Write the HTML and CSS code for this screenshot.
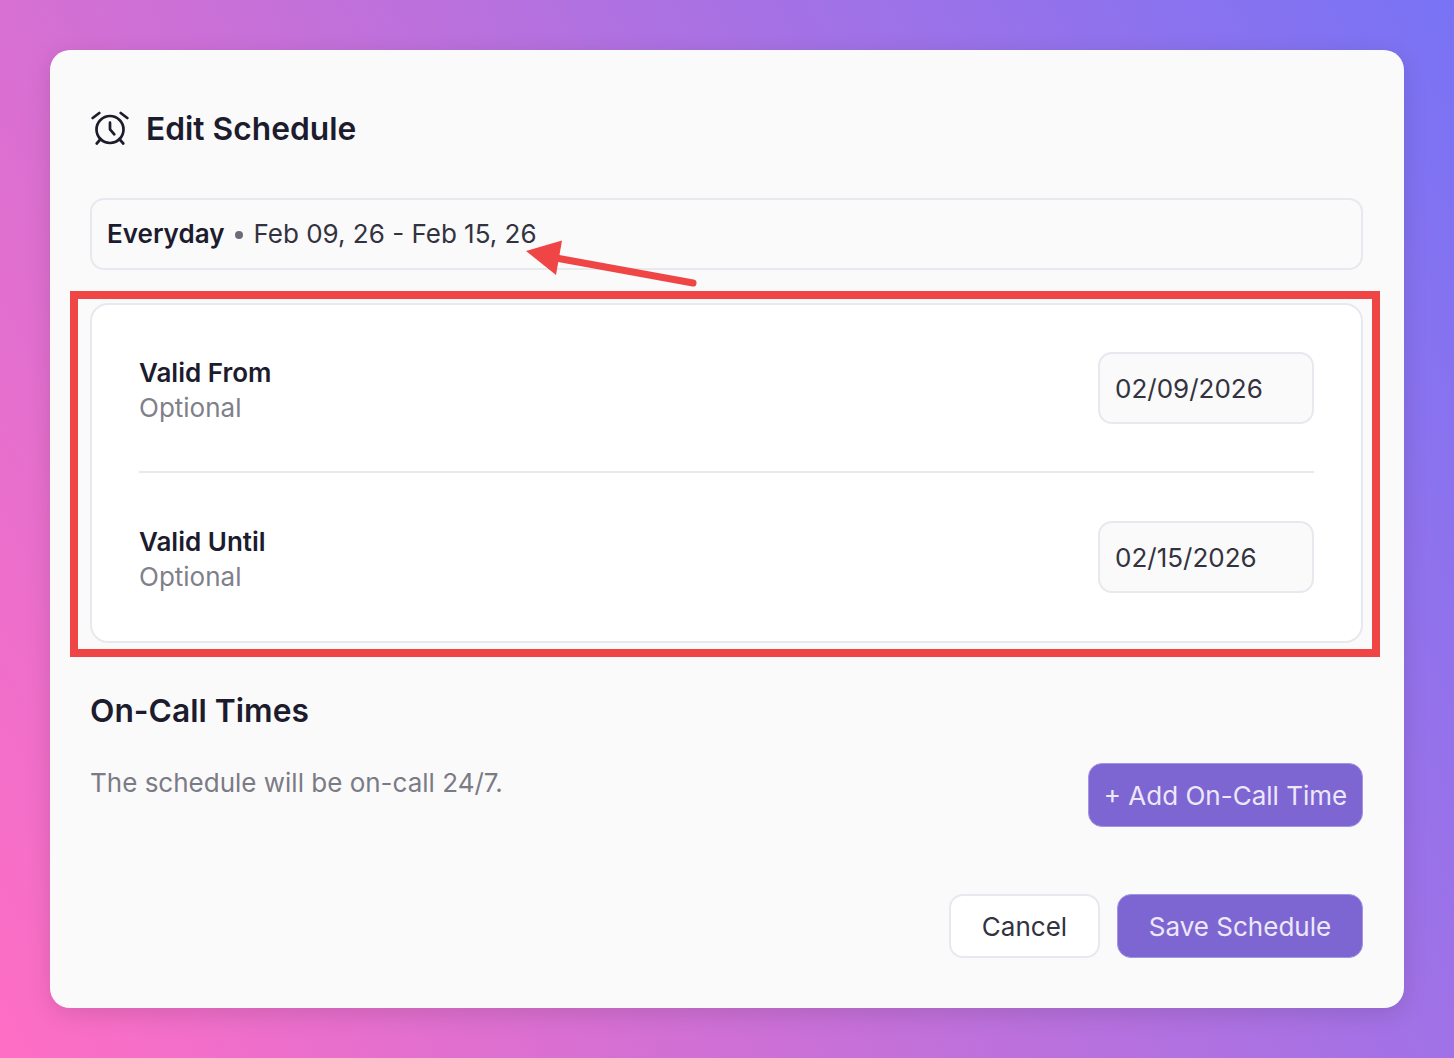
FILE: index.html
```html
<!DOCTYPE html>
<html lang="en">
<head>
    <meta charset="UTF-8">
    <meta name="viewport" content="width=device-width, initial-scale=1.0">
    <title>Edit Schedule</title>
    <link rel="stylesheet" href="styles.css">
</head>
<body>
    <div class="card">
        <div class="title-row">
            <svg class="clock" viewBox="0 0 38 38" fill="none" stroke="#1c1c2b" stroke-width="2.7" stroke-linecap="round" stroke-linejoin="round">
                <circle cx="19" cy="20.5" r="13.5"/>
                <path d="M19 13.7V20.3L23.3 25.3"/>
                <path d="M1.7 9L8.3 4"/>
                <path d="M36.3 9L29.7 4"/>
                <path d="M9.7 30L5.7 34.5"/>
                <path d="M28.3 30L32.3 34.5"/>
            </svg>
            <h1>Edit Schedule</h1>
        </div>

        <div class="summary">
            <strong>Everyday</strong>
            <span class="dot"></span>
            <span>Feb 09, 26 - Feb 15, 26</span>
        </div>

        <div class="panel">
            <div class="panel-row">
                <div class="label">
                    <div class="label-name">Valid From</div>
                    <div class="label-hint">Optional</div>
                </div>
                <div class="date-box">02/09/2026</div>
            </div>
            <div class="panel-row second">
                <div class="label">
                    <div class="label-name">Valid Until</div>
                    <div class="label-hint">Optional</div>
                </div>
                <div class="date-box">02/15/2026</div>
            </div>
        </div>

        <h2>On-Call Times</h2>
        <div class="oncall-row">
            <p>The schedule will be on-call 24/7.</p>
            <button type="button" class="btn btn-add">+ Add On-Call Time</button>
        </div>

        <div class="footer">
            <button type="button" class="btn btn-cancel">Cancel</button>
            <button type="button" class="btn btn-save">Save Schedule</button>
        </div>
    </div>

    <!-- red annotations on top of the screenshot -->
    <div class="mark-box"></div>
    <svg class="mark-arrow" viewBox="0 0 180 50" fill="none">
        <path d="M167 43L30 18" stroke="#f04545" stroke-width="7" stroke-linecap="round"/>
        <path d="M0 11L36 0.5L30 35Z" fill="#f04545"/>
    </svg>
</body>
</html>
```

FILE: styles.css
```css
html, body {
    height: 100%;
}

body {
    margin: 0;
    padding: 50px;
    box-sizing: border-box;
    height: 1058px;
    overflow: hidden;
    position: relative;
    font-family: 'Inter', 'Liberation Sans', sans-serif;
    color: #1c1c2e;
    background: linear-gradient(60deg, #ff6ec4 0%, #7873f5 100%);
}

.card {
    box-sizing: border-box;
    width: 1354px;
    height: 958px;
    padding: 0 41px 0 40px;
    background-color: #fafafa;
    border-radius: 20px;
    box-shadow: 0 6px 24px rgba(0, 0, 0, 0.12);
}

.title-row {
    box-sizing: border-box;
    display: flex;
    align-items: center;
    gap: 17px;
    height: 148px;
    padding-top: 8px;
    padding-left: 1px;
}

.clock {
    width: 38px;
    height: 38px;
}

h1 {
    margin: 0;
    font-size: 31.75px;
    font-weight: 600;
}

.summary {
    box-sizing: border-box;
    display: flex;
    align-items: center;
    height: 72px;
    padding: 0 15px 2px;
    font-size: 26px;
    color: #33333f;
    background-color: #fafafa;
    border: 2px solid #e8e8ef;
    border-radius: 14px;
}

.summary strong {
    font-weight: 600;
    color: #1c1c2e;
}

.dot {
    width: 8px;
    height: 8px;
    margin: 3px 10px 0 11px;
    border-radius: 50%;
    background-color: #6c6c78;
}

.panel {
    box-sizing: border-box;
    height: 340px;
    margin-top: 33px;
    padding: 0 47px;
    background-color: white;
    border: 2px solid #e8e8ef;
    border-radius: 18px;
}

.panel-row {
    display: flex;
    justify-content: space-between;
    align-items: center;
    height: 166px;
}

.panel-row.second {
    height: 168px;
    border-top: 2px solid #e8e8ec;
}

.label {
    padding-top: 4px;
}

.label-name {
    font-size: 26px;
    font-weight: 600;
    line-height: 35px;
}

.label-hint {
    font-size: 26px;
    line-height: 35px;
    color: #80808a;
}

.date-box {
    box-sizing: border-box;
    display: flex;
    align-items: center;
    width: 216px;
    height: 72px;
    padding-left: 15px;
    font-size: 26px;
    color: #33333f;
    background-color: #fafafa;
    border: 2px solid #e8e8ef;
    border-radius: 14px;
}

h2 {
    margin: 49px 0 0;
    font-size: 31.75px;
    line-height: 38px;
    font-weight: 600;
}

.oncall-row {
    display: flex;
    justify-content: space-between;
    margin-top: 33px;
}

.oncall-row p {
    margin: 0;
    font-size: 26px;
    line-height: 40px;
    color: #7b7b86;
}

.btn {
    box-sizing: border-box;
    height: 64px;
    font-family: inherit;
    font-size: 26px;
    border-radius: 14px;
    cursor: pointer;
}

.btn-add {
    width: 275px;
    padding: 0;
    color: #ece8fa;
    background-color: #7e66d2;
    border: 1px solid #a594e2;
}

.footer {
    display: flex;
    justify-content: flex-end;
    gap: 17px;
    margin-top: 67px;
}

.btn-cancel {
    width: 151px;
    color: #33333f;
    background-color: white;
    border: 2px solid #e8e8ef;
}

.btn-save {
    width: 246px;
    color: #ece8fa;
    background-color: #7e66d2;
    border: 1px solid #a594e2;
}

.mark-box {
    position: absolute;
    left: 70px;
    top: 291px;
    width: 1310px;
    height: 366px;
    box-sizing: border-box;
    border: 8px solid #f04545;
}

.mark-arrow {
    position: absolute;
    left: 526px;
    top: 240px;
    width: 180px;
    height: 50px;
}
```
